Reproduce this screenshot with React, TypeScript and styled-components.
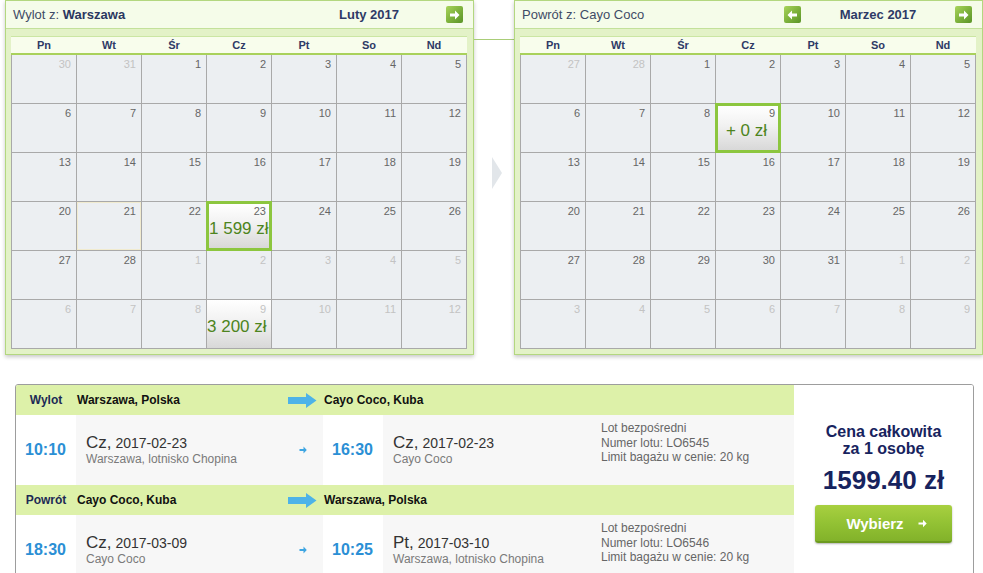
import styled, { createGlobalStyle } from "styled-components";

const GlobalStyle = createGlobalStyle`
  body {
    margin: 0;
    background: #fff;
    font-family: "Liberation Sans", Arial, sans-serif;
  }
`;

type Day = {
  n: number;
  other?: boolean;
  price?: string;
  selected?: boolean;
  shaded?: boolean;
  hover?: boolean;
};

function range(from: number, to: number, other = false): Day[] {
  const out: Day[] = [];
  for (let i = from; i <= to; i++) out.push({ n: i, other });
  return out;
}

const febDays: Day[] = [
  ...range(30, 31, true),
  ...range(1, 28),
  ...range(1, 12, true),
].map((d, i) => {
  if (i === 22) return { ...d, hover: true };
  if (i === 24) return { ...d, price: "1 599 zł", selected: true };
  if (i === 38) return { ...d, price: "3 200 zł", shaded: true };
  return d;
});

const marDays: Day[] = [
  ...range(27, 28, true),
  ...range(1, 31),
  ...range(1, 9, true),
].map((d, i) => (i === 10 ? { ...d, price: "+ 0 zł", selected: true } : d));

const weekDays = ["Pn", "Wt", "Śr", "Cz", "Pt", "So", "Nd"];

function NavArrow({ back }: { back?: boolean }) {
  return (
    <NavButton>
      <svg width="11" height="10" viewBox="0 0 11 10">
        <path
          d={back ? "M10 3.5H5V0.5L0.5 5L5 9.5V6.5H10Z" : "M1 3.5H6V0.5L10.5 5L6 9.5V6.5H1Z"}
          fill="#fff"
        />
      </svg>
    </NavButton>
  );
}

type CalendarProps = {
  label: string;
  city: string;
  strongCity?: boolean;
  month: string;
  withPrev?: boolean;
  days: Day[];
};

function Calendar({ label, city, strongCity, month, withPrev, days }: CalendarProps) {
  return (
    <Panel>
      <PanelHeader>
        <PanelTitle>
          {label} <City strong={strongCity}>{city}</City>
        </PanelTitle>
        <MonthNav>
          <NavSlot>{withPrev ? <NavArrow back /> : null}</NavSlot>
          <MonthName>{month}</MonthName>
          <NavSlot>
            <NavArrow />
          </NavSlot>
        </MonthNav>
      </PanelHeader>
      <PanelBody>
        <WeekRow>
          {weekDays.map((w) => (
            <WeekDay key={w}>{w}</WeekDay>
          ))}
        </WeekRow>
        <Grid>
          {days.map((d, i) => (
            <Cell
              key={i}
              selected={Boolean(d.selected)}
              shaded={Boolean(d.shaded)}
              hover={Boolean(d.hover)}
            >
              <DayNum other={Boolean(d.other)}>{d.n}</DayNum>
              {d.price ? <Price>{d.price}</Price> : null}
            </Cell>
          ))}
        </Grid>
      </PanelBody>
    </Panel>
  );
}

function BigArrow() {
  return (
    <svg width="29" height="15" viewBox="0 0 29 15">
      <path d="M0 4H18V0L28.5 7.5L18 15V11H0Z" fill="#4db3e8" />
    </svg>
  );
}

function SmallArrow() {
  return (
    <svg width="8" height="8" viewBox="0 0 8 8">
      <path d="M0.5 3H4.5V0.5L7.8 4L4.5 7.5V5H0.5Z" fill="#3ea6e2" />
    </svg>
  );
}

type LegProps = {
  label: string;
  from: string;
  to: string;
  depTime: string;
  depDay: string;
  depDate: string;
  depPlace: string;
  arrTime: string;
  arrDay: string;
  arrDate: string;
  arrPlace: string;
  flight: string;
};

function Leg(p: LegProps) {
  return (
    <>
      <LegHeader>
        <LegLabel>{p.label}</LegLabel>
        <FromCity>
          <span>{p.from}</span>
          <BigArrow />
        </FromCity>
        <ToCity>{p.to}</ToCity>
      </LegHeader>
      <LegBody>
        <TimeCell>{p.depTime}</TimeCell>
        <StopCell width={247}>
          <StopText>
            <DateLine>
              <DayName>{p.depDay},</DayName> {p.depDate}
            </DateLine>
            <PlaceLine>{p.depPlace}</PlaceLine>
          </StopText>
          <Pointer>
            <SmallArrow />
          </Pointer>
        </StopCell>
        <TimeCell>{p.arrTime}</TimeCell>
        <StopCell width={211}>
          <StopText>
            <DateLine>
              <DayName>{p.arrDay},</DayName> {p.arrDate}
            </DateLine>
            <PlaceLine>{p.arrPlace}</PlaceLine>
          </StopText>
        </StopCell>
        <InfoCell>
          <div>Lot bezpośredni</div>
          <div>Numer lotu: {p.flight}</div>
          <div>Limit bagażu w cenie: 20 kg</div>
        </InfoCell>
      </LegBody>
    </>
  );
}

export default function App() {
  return (
    <Page>
      <GlobalStyle />
      <Calendars>
        <Calendar
          label="Wylot z:"
          city="Warszawa"
          strongCity
          month="Luty 2017"
          days={febDays}
        />
        <Between>
          <Connector />
          <Chevron>
            <svg width="10" height="32" viewBox="0 0 10 32">
              <path d="M0 0L10 16L0 32Z" fill="#e2e6ea" />
            </svg>
          </Chevron>
        </Between>
        <Calendar
          label="Powrót z:"
          city="Cayo Coco"
          month="Marzec 2017"
          withPrev
          days={marDays}
        />
      </Calendars>

      <Offer>
        <Legs>
          <Leg
            label="Wylot"
            from="Warszawa, Polska"
            to="Cayo Coco, Kuba"
            depTime="10:10"
            depDay="Cz"
            depDate="2017-02-23"
            depPlace="Warszawa, lotnisko Chopina"
            arrTime="16:30"
            arrDay="Cz"
            arrDate="2017-02-23"
            arrPlace="Cayo Coco"
            flight="LO6545"
          />
          <Leg
            label="Powrót"
            from="Cayo Coco, Kuba"
            to="Warszawa, Polska"
            depTime="18:30"
            depDay="Cz"
            depDate="2017-03-09"
            depPlace="Cayo Coco"
            arrTime="10:25"
            arrDay="Pt"
            arrDate="2017-03-10"
            arrPlace="Warszawa, lotnisko Chopina"
            flight="LO6546"
          />
        </Legs>
        <PriceBox>
          <PriceLabel>
            Cena całkowita
            <br />
            za 1 osobę
          </PriceLabel>
          <Total>1599.40 zł</Total>
          <ChooseButton>
            Wybierz
            <svg width="9" height="9" viewBox="0 0 9 9">
              <path d="M0.5 3.5H5V0.8L8.7 4.5L5 8.2V5.5H0.5Z" fill="#fff" />
            </svg>
          </ChooseButton>
        </PriceBox>
      </Offer>
    </Page>
  );
}

const Page = styled.div`
  width: 983px;
  height: 573px;
  overflow: hidden;
`;

const Calendars = styled.div`
  display: flex;
  padding-left: 5px;
`;

const Panel = styled.div`
  width: 469px;
  box-sizing: border-box;
  border: 1px solid #b3d77f;
  background: #e3f2c7;
  box-shadow: 0 2px 4px rgba(0, 0, 0, 0.22);
`;

const PanelHeader = styled.div`
  height: 27px;
  display: flex;
  align-items: center;
  justify-content: space-between;
  padding: 0 10px 0 7px;
  background: #f5fce9;
  border-bottom: 1px solid #c3e19a;
`;

const PanelTitle = styled.div`
  font-size: 13px;
  color: #3f4b66;
`;

const City = styled.span<{ strong?: boolean }>`
  font-weight: ${(props) => (props.strong ? "bold" : "normal")};
  color: ${(props) => (props.strong ? "#2a3760" : "#3f4b66")};
`;

const MonthNav = styled.div`
  display: flex;
  align-items: center;
  width: 188px;
`;

const NavSlot = styled.div`
  width: 17px;
  height: 17px;
`;

const NavButton = styled.div`
  width: 17px;
  height: 17px;
  border-radius: 2px;
  background: linear-gradient(135deg, #a9d45c 0%, #7fb33d 50%, #5a9428 100%);
  display: flex;
  align-items: center;
  justify-content: center;
`;

const MonthName = styled.div`
  flex: 1;
  text-align: center;
  font-size: 13px;
  font-weight: bold;
  color: #2e3a66;
`;

const PanelBody = styled.div`
  padding: 7px 5px 5px 5px;
`;

const WeekRow = styled.div`
  display: grid;
  grid-template-columns: repeat(7, 64px);
  column-gap: 1px;
  width: 456px;
  box-sizing: border-box;
  padding: 0 1px;
  background: #f8fdec;
  border-top: 1px solid #cbe6a3;
  border-bottom: 2px solid #a9d15b;
`;

const WeekDay = styled.div`
  height: 16px;
  line-height: 16px;
  text-align: center;
  font-size: 11px;
  font-weight: bold;
  color: #2e3a66;
`;

const Grid = styled.div`
  display: grid;
  grid-template-columns: repeat(7, 64px);
  grid-auto-rows: 48px;
  gap: 1px;
  width: 456px;
  box-sizing: border-box;
  padding: 0 1px 1px 1px;
  background: #a9a9a9;
`;

type CellProps = {
  selected: boolean;
  shaded: boolean;
  hover: boolean;
};

const Cell = styled.div<CellProps>`
  display: flex;
  flex-direction: column;
  align-items: stretch;
  box-sizing: border-box;
  padding: ${(props) => (props.selected ? "1px 3px 0 0" : "3px 5px 0 0")};
  margin: ${(props) => (props.selected ? "-1px" : "0")};
  border: ${(props) => (props.selected ? "3px solid #8cc63f" : "none")};
  position: ${(props) => (props.selected ? "relative" : "static")};
  z-index: ${(props) => (props.selected ? 1 : "auto")};
  background: ${(props) =>
    props.selected || props.shaded
      ? "linear-gradient(to bottom, #ffffff 0%, #f1f1f1 45%, #d8d8d8 100%)"
      : "#eceff2"};
  box-shadow: ${(props) => (props.hover ? "inset 0 0 0 1px #f1ebcf" : "none")};
`;

const DayNum = styled.div<{ other: boolean }>`
  text-align: right;
  font-size: 11px;
  line-height: 13px;
  color: ${(props) => (props.other ? "#c3c3c3" : "#666")};
`;

const Price = styled.div`
  text-align: center;
  font-size: 17px;
  line-height: 22px;
  color: #4d8420;
  white-space: nowrap;
`;

const Between = styled.div`
  width: 40px;
  display: flex;
  flex-direction: column;
`;

const Connector = styled.div`
  margin-top: 39px;
  height: 1px;
  background: #a9cd78;
`;

const Chevron = styled.div`
  margin-top: 117px;
  padding-left: 18px;
  line-height: 0;
`;

const Offer = styled.div`
  margin: 29px 0 0 15px;
  width: 959px;
  height: 220px;
  box-sizing: border-box;
  border: 1px solid #9d9d9d;
  border-radius: 3px;
  display: flex;
  overflow: hidden;
`;

const Legs = styled.div`
  width: 778px;
`;

const LegHeader = styled.div`
  height: 30px;
  display: flex;
  align-items: center;
  background: #ddf1a9;
  font-size: 12px;
  font-weight: bold;
  color: #111;
`;

const LegLabel = styled.div`
  width: 60px;
  text-align: center;
  color: #1d2a55;
`;

const FromCity = styled.div`
  width: 247px;
  box-sizing: border-box;
  padding: 0 6px 0 1px;
  display: flex;
  align-items: center;
  justify-content: space-between;
`;

const ToCity = styled.div`
  padding-left: 1px;
`;

const LegBody = styled.div`
  height: 70px;
  display: flex;
  background: #f7f7f7;
`;

const TimeCell = styled.div`
  width: 60px;
  box-sizing: border-box;
  padding-left: 9px;
  display: flex;
  align-items: center;
  background: #fff;
  font-size: 16px;
  font-weight: bold;
  color: #2b8fd5;
`;

const StopCell = styled.div<{ width: number }>`
  width: ${(props) => props.width}px;
  box-sizing: border-box;
  padding-left: 10px;
  display: flex;
  align-items: center;
`;

const StopText = styled.div`
  flex: 1;
`;

const DateLine = styled.div`
  font-size: 14px;
  line-height: 17px;
  color: #333;
`;

const DayName = styled.span`
  font-size: 17px;
`;

const PlaceLine = styled.div`
  font-size: 12px;
  line-height: 14px;
  color: #7a7a7a;
`;

const Pointer = styled.div`
  padding-right: 16px;
  line-height: 0;
`;

const InfoCell = styled.div`
  flex: 1;
  padding: 6px 0 0 7px;
  font-size: 12px;
  line-height: 14.5px;
  color: #666;
`;

const PriceBox = styled.div`
  flex: 1;
  display: flex;
  flex-direction: column;
  align-items: center;
  padding-top: 38px;
  background: #fff;
`;

const PriceLabel = styled.div`
  font-size: 16px;
  line-height: 17px;
  font-weight: bold;
  text-align: center;
  color: #17235e;
`;

const Total = styled.div`
  margin-top: 8px;
  font-size: 26px;
  line-height: 30px;
  font-weight: bold;
  color: #17235e;
`;

const ChooseButton = styled.div`
  margin-top: 10px;
  width: 137px;
  height: 38px;
  box-sizing: border-box;
  display: flex;
  align-items: center;
  justify-content: center;
  gap: 14px;
  padding-left: 6px;
  border-radius: 3px;
  border-bottom: 2px solid #6c9a20;
  background: linear-gradient(to bottom, #a8d040 0%, #93c234 50%, #82b22a 100%);
  box-shadow: 0 1px 2px rgba(0, 0, 0, 0.3);
  font-size: 15px;
  font-weight: bold;
  color: #fff;
`;
